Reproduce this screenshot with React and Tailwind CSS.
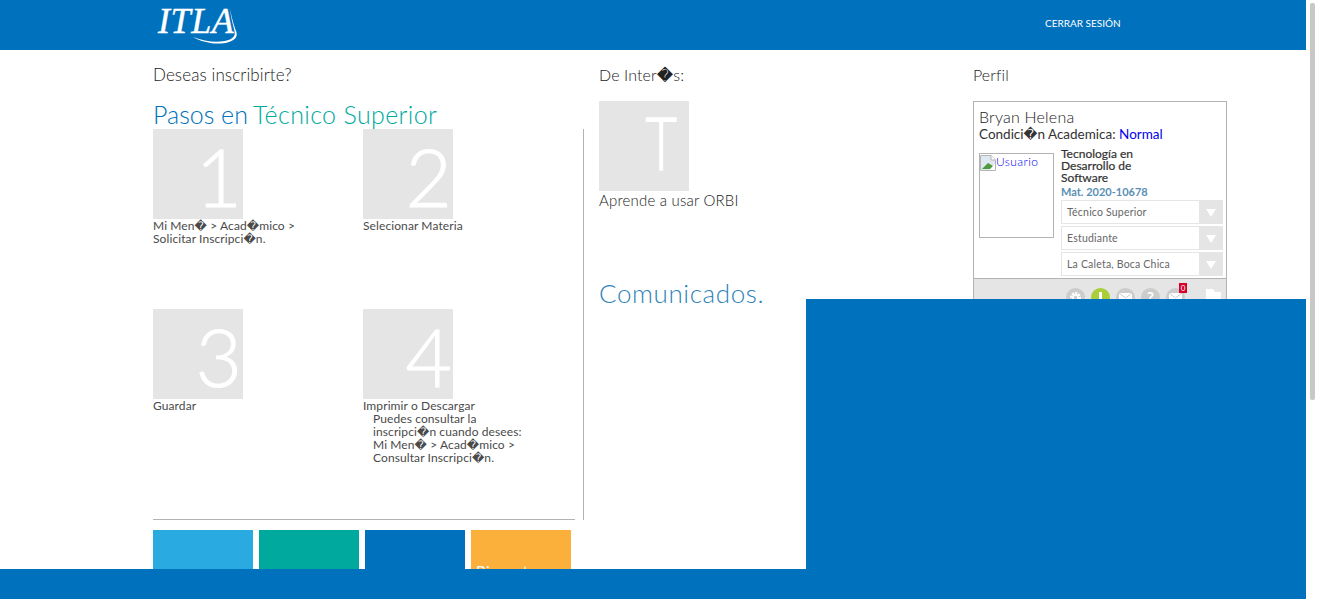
const R = "\uFFFD";

function Tile({ ch }) {
  return (
    <div className="w-[90px] h-[90px] bg-[#e5e5e5] text-white font-light leading-[95px] text-right pr-[1px] overflow-hidden text-[80px] [-webkit-text-stroke:1px_#fff]">
      {ch}
    </div>
  );
}

function Step({ ch, children }) {
  return (
    <div>
      <Tile ch={ch} />
      <div className="text-[12px] leading-[13px] tracking-[0.1px] text-[#4a4a4a] w-[175px]">{children}</div>
    </div>
  );
}

function Select({ label }) {
  return (
    <div className="h-[24px] bg-[#e5e5e5] p-[1px] flex">
      <div className="w-[137px] bg-white text-[10.5px] tracking-[0.2px] text-[#666] pl-[5px] leading-[22px]">{label}</div>
      <div className="flex-1 flex items-center justify-center">
        <svg width="10" height="9" viewBox="0 0 10 9"><path d="M0 1h10L5 9z" fill="#fff" /></svg>
      </div>
    </div>
  );
}

function Circle({ bg = "bg-[#cccccc]", children }) {
  return (
    <div className={`relative w-[19px] h-[19px] rounded-full ${bg} flex items-center justify-center`}>
      {children}
    </div>
  );
}

const Mail = () => (
  <svg width="13" height="10" viewBox="0 0 13 10">
    <rect width="13" height="10" fill="#fff" />
    <path d="M0 0l6.5 5L13 0" fill="none" stroke="#ccc" strokeWidth="1" />
  </svg>
);

export default function App() {
  return (
    <div className="relative flex h-[599px] w-[1318px] overflow-hidden bg-white text-[#222] [font-family:Lato,'DejaVu_Sans',sans-serif]">
      <div className="w-[1306px] shrink-0">
        <header className="h-[50px] bg-[#0071bc] flex items-start">
          <div className="relative ml-[158px] w-[84px] h-[50px] text-white">
            <span className="block [font-family:'Liberation_Serif',serif] italic text-[36px] leading-[36px] pt-[3px] tracking-[0.6px] [-webkit-text-stroke:0.4px_#fff]">ITLA</span>
            <svg className="absolute left-0 top-0" width="84" height="50" viewBox="0 0 84 50">
              <path d="M35 37c10 6 26 8.500 36 5 7-2.500 9-6 7-11-2-5-4-12-6-22 1 9 3 16 4.500 22 1 4-.5 7-6 9-9 3-23 2-35.500-3z" fill="#fff" />
            </svg>
          </div>
          <a className="ml-[803px] mt-[17px] text-white text-[10px] leading-[13px]">CERRAR SESIÓN</a>
        </header>

        <main className="flex pl-[153px] pt-[15px]">
          <section className="w-[431px] shrink-0">
            <h2 className="text-[17px] leading-[20px] font-light tracking-[0.1px]">Deseas inscribirte?</h2>
            <h1 className="mt-[15px] h-[29px] text-[25px] leading-[28px] font-light text-[#0071bc] flex gap-[5px]">
              <span>Pasos en</span>
              <span className="text-[#00a99d] tracking-[0.35px]">Técnico Superior</span>
            </h1>
            <div className="border-r border-[#b3b3b3]">
              <div className="w-[422px] h-[391px] border-b border-[#b3b3b3] grid grid-cols-[210px_210px] grid-rows-[180px_210px]">
                <Step ch="1">Mi Men{R} &gt; Acad{R}mico &gt;<br />Solicitar Inscripci{R}n.</Step>
                <Step ch="2">Selecionar Materia</Step>
                <Step ch="3">Guardar</Step>
                <Step ch="4">
                  Imprimir o Descargar
                  <div className="pl-[10px]">
                    Puedes consultar la<br />inscripci{R}n cuando desees:<br />Mi Men{R} &gt; Acad{R}mico &gt;<br />Consultar Inscripci{R}n.
                  </div>
                </Step>
              </div>
            </div>
            <div className="flex gap-[6px] mt-[10px]">
              <div className="w-[100px] h-[100px] bg-[#29abe2]" />
              <div className="w-[100px] h-[100px] bg-[#00a99d]" />
              <div className="w-[100px] h-[100px] bg-[#0071bc]" />
              <div className="w-[100px] h-[100px] bg-[#fbb03b] text-white text-[15px] pl-[5px] pt-[30px] tracking-[0.5px]">Bienestar</div>
            </div>
          </section>

          <section className="w-[389px] shrink-0 pl-[15px]">
            <h2 className="text-[16px] leading-[20px] font-light tracking-[0.1px]">De Inter{R}s:</h2>
            <div className="mt-[16px] w-[90px] h-[90px] bg-[#e5e5e5] text-white font-light text-[72px] leading-[82px] text-right pr-[12px] overflow-hidden [-webkit-text-stroke:1.5px_#fff]">
              <span className="inline-block origin-right scale-x-[0.75]">T</span>
            </div>
            <div className="text-[15px] leading-[18px] tracking-[0.2px] mt-[0px] font-light">Aprende a usar ORBI</div>
            <h1 className="mt-[70px] text-[26px] leading-[28px] font-light text-[#2f82b8] tracking-[0.6px]">Comunicados.</h1>
          </section>

          <section className="w-[254px] shrink-0">
            <h2 className="text-[16px] leading-[20px] font-light tracking-[0.1px]">Perfil</h2>
            <div className="mt-[16px] border border-[#b3b3b3]">
              <div className="pl-[5px] pr-[3px] pt-[5px] h-[176px]">
                <div className="text-[16px] leading-[19px] tracking-[0.2px] font-light">Bryan Helena</div>
                <div className="text-[13.5px] leading-[16px] text-[#333]">Condici{R}n Academica: <span className="text-[#0000ee]">Normal</span></div>
                <div className="flex mt-[6px] gap-[7px]">
                  <div className="w-[75px] h-[85px] mt-[5px] border border-[#b3b3b3] shrink-0 flex items-start text-[12px] leading-[14px] text-[#0000ee] font-light tracking-[0.4px] pt-[1px]">
                    <svg width="16" height="16" viewBox="0 0 16 16" className="shrink-0">
                      <path d="M0.5 0.500H11L15.5 5V15.500H0.5z" fill="#dfe8f2" stroke="#b5b5b5" />
                      <path d="M11 0.500V5H15.5" fill="#fff" stroke="#b5b5b5" />
                      <path d="M2 14L8 8l5 3-1 3z" fill="#4e9a3c" />
                      <path d="M9 15l6-6v6z" fill="#fff" />
                    </svg>
                    <span>Usuario</span>
                  </div>
                  <div className="w-[162px] shrink-0">
                    <div className="text-[12px] leading-[12px] text-[#333] w-[100px] [-webkit-text-stroke:0.2px_#333]">Tecnología en Desarrollo de Software</div>
                    <div className="text-[11px] leading-[14px] mt-[1px] font-bold text-[#5a8fb5]">Mat. 2020-10678</div>
                    <div className="flex flex-col gap-[2px] mt-[1px]">
                      <Select label="Técnico Superior" />
                      <Select label="Estudiante" />
                      <Select label="La Caleta, Boca Chica" />
                    </div>
                  </div>
                </div>
              </div>
              <div className="h-[40px] bg-[#e5e5e5] border-t border-[#b3b3b3] flex items-start pt-[9px] pl-[92px]">
                <div className="flex gap-[6px]">
                  <Circle><svg width="13" height="13" viewBox="0 0 13 13"><circle cx="6.500" cy="6.500" r="4" fill="none" stroke="#fff" strokeWidth="3" strokeDasharray="2 1" /><circle cx="6.500" cy="6.500" r="2.600" fill="none" stroke="#fff" strokeWidth="1.600" /></svg></Circle>
                  <Circle bg="bg-[#a8cf38]"><span className="w-[3px] h-[11px] bg-white" /></Circle>
                  <Circle><Mail /></Circle>
                  <Circle><span className="text-white text-[15px] font-bold leading-none">?</span></Circle>
                  <Circle>
                    <Mail />
                    <span className="absolute -top-[5px] -right-[2px] w-[8px] h-[10px] bg-[#d4002a] text-white text-[8px] leading-[10px] text-center">0</span>
                  </Circle>
                </div>
                <svg className="ml-[20px] mt-[1px]" width="16" height="18" viewBox="0 0 16 18"><path d="M1 0h7l2 3h6v14H1z" fill="#fff" /></svg>
              </div>
            </div>
          </section>
        </main>
      </div>

      <div className="flex-1 pt-[3px] pl-[4px]">
        <div className="w-[5px] h-[397px] bg-[#c8c8c8] rounded-[2px]" />
      </div>

      <div className="absolute left-[806px] top-[299px] w-[500px] h-[300px] bg-[#0071bc]" />
      <div className="absolute left-0 top-[569px] w-[1306px] h-[30px] bg-[#0071bc]" />
    </div>
  );
}
